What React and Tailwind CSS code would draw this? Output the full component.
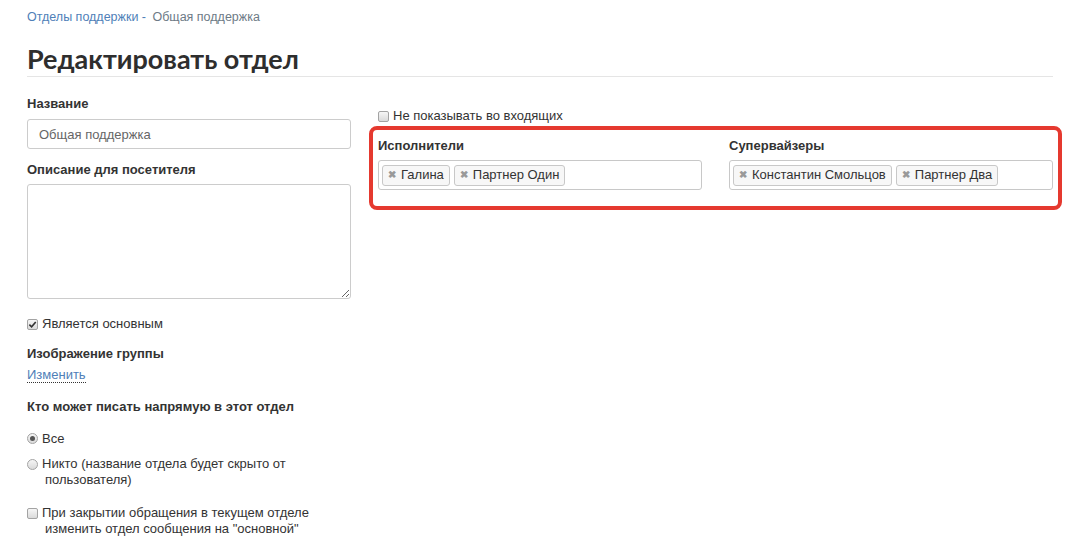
const Check = ({ checked }) => (
  <span className="inline-flex items-center justify-center w-[11px] h-[11px] shrink-0 border border-[#a3a3a3] rounded-[2px] bg-gradient-to-b from-[#f6f6f6] to-[#dadada]">
    {checked && (
      <svg viewBox="0 0 10 10" className="w-[9px] h-[9px]">
        <path d="M1.5 5.2 L4 7.6 L8.6 2.2" fill="none" stroke="#333" strokeWidth="1.8" />
      </svg>
    )}
  </span>
)

const Radio = ({ checked }) => (
  <span className="inline-flex items-center justify-center w-[11px] h-[11px] shrink-0 border border-[#a3a3a3] rounded-full bg-gradient-to-b from-[#f6f6f6] to-[#dadada]">
    {checked && <span className="w-[5px] h-[5px] rounded-full bg-[#555]" />}
  </span>
)

const Tag = ({ label }) => (
  <span className="flex items-center gap-[5px] h-[21px] px-[5px] border border-[#c8c8c8] rounded-[3px] bg-[#f7f7f7] text-[13px] text-[#333]">
    <span className="text-[#999] text-[10px] font-bold leading-none">✖</span>
    {label}
  </span>
)

export default function App() {
  return (
    <div className="min-h-screen bg-white text-[#333] pl-[27px] pr-[4px] pt-[9px] font-['Liberation_Sans',Arial,sans-serif]">
      {/* Breadcrumb */}
      <div className="text-[12.5px] leading-[16px]">
        <a href="#" className="text-[#4f80b8]">Отделы поддержки - </a>
        <span className="text-[#6d7a86] ml-[3px]">Общая поддержка</span>
      </div>

      <h1 className="mt-[19px] text-[27px] font-bold leading-[30px] font-['Lato','Liberation_Sans',sans-serif] text-[#2e2e2e] pb-[2px] border-b border-[#e5e5e5] mr-[9px]">
        Редактировать отдел
      </h1>

      <div className="flex gap-[18px] mt-[18px]">
        {/* Left column */}
        <div className="w-[324px] shrink-0 text-[13px]">
          <label className="block font-bold leading-[18px]">Название</label>
          <input
            defaultValue="Общая поддержка"
            className="mt-[6px] w-full h-[30px] border border-[#ccc] rounded-[3px] px-[11px] text-[13px] text-[#666] outline-none"
          />

          <label className="block mt-[12px] font-bold leading-[18px]">Описание для посетителя</label>
          <textarea className="mt-[5px] w-full h-[115px] border border-[#ccc] rounded-[3px] block outline-none" />

          <label className="flex items-center gap-[4px] mt-[17px] leading-[16px]">
            <Check checked />
            Является основным
          </label>

          <div className="mt-[13px] font-bold leading-[18px]">Изображение группы</div>
          <a href="#" className="inline-block mt-[4px] text-[#4f80b8] border-b border-dotted border-[#333] leading-[15px]">Изменить</a>

          <div className="mt-[13px] font-bold leading-[18px]">Кто может писать напрямую в этот отдел</div>

          <div className="mt-[15px] leading-[16px]">
            <label className="flex items-center gap-[4px]">
              <Radio checked />
              Все
            </label>
            <label className="flex items-start gap-[4px] mt-[9px]">
              <span className="mt-[2px]"><Radio /></span>
              <span>Никто (название отдела будет скрыто от<br /><span className="ml-[3px]">пользователя)</span></span>
            </label>
            <label className="flex items-start gap-[4px] mt-[17px]">
              <span className="mt-[2px]"><Check /></span>
              <span>При закрытии обращения в текущем отделе<br /><span className="ml-[3px]">изменить отдел сообщения на "основной"</span></span>
            </label>
          </div>
        </div>

        {/* Right column */}
        <div className="flex-1">
          <label className="flex items-center gap-[4px] mt-[13px] ml-[9px] text-[13px] leading-[16px]">
            <Check />
            Не показывать во входящих
          </label>

          <div className="mt-[2px] border-[4px] border-[#e5392f] rounded-[8px] px-[5px] pt-[7px] pb-[16px] flex gap-[27px]">
            <div className="flex-1">
              <div className="text-[13px] font-bold leading-[18px]">Исполнители</div>
              <div className="mt-[5px] h-[30px] border border-[#c8c8c8] rounded-[3px] flex items-center gap-[4px] px-[3px]">
                <Tag label="Галина" />
                <Tag label="Партнер Один" />
              </div>
            </div>
            <div className="flex-1">
              <div className="text-[13px] font-bold leading-[18px]">Супервайзеры</div>
              <div className="mt-[5px] h-[30px] border border-[#c8c8c8] rounded-[3px] flex items-center gap-[4px] px-[3px]">
                <Tag label="Константин Смольцов" />
                <Tag label="Партнер Два" />
              </div>
            </div>
          </div>
        </div>
      </div>
    </div>
  )
}
